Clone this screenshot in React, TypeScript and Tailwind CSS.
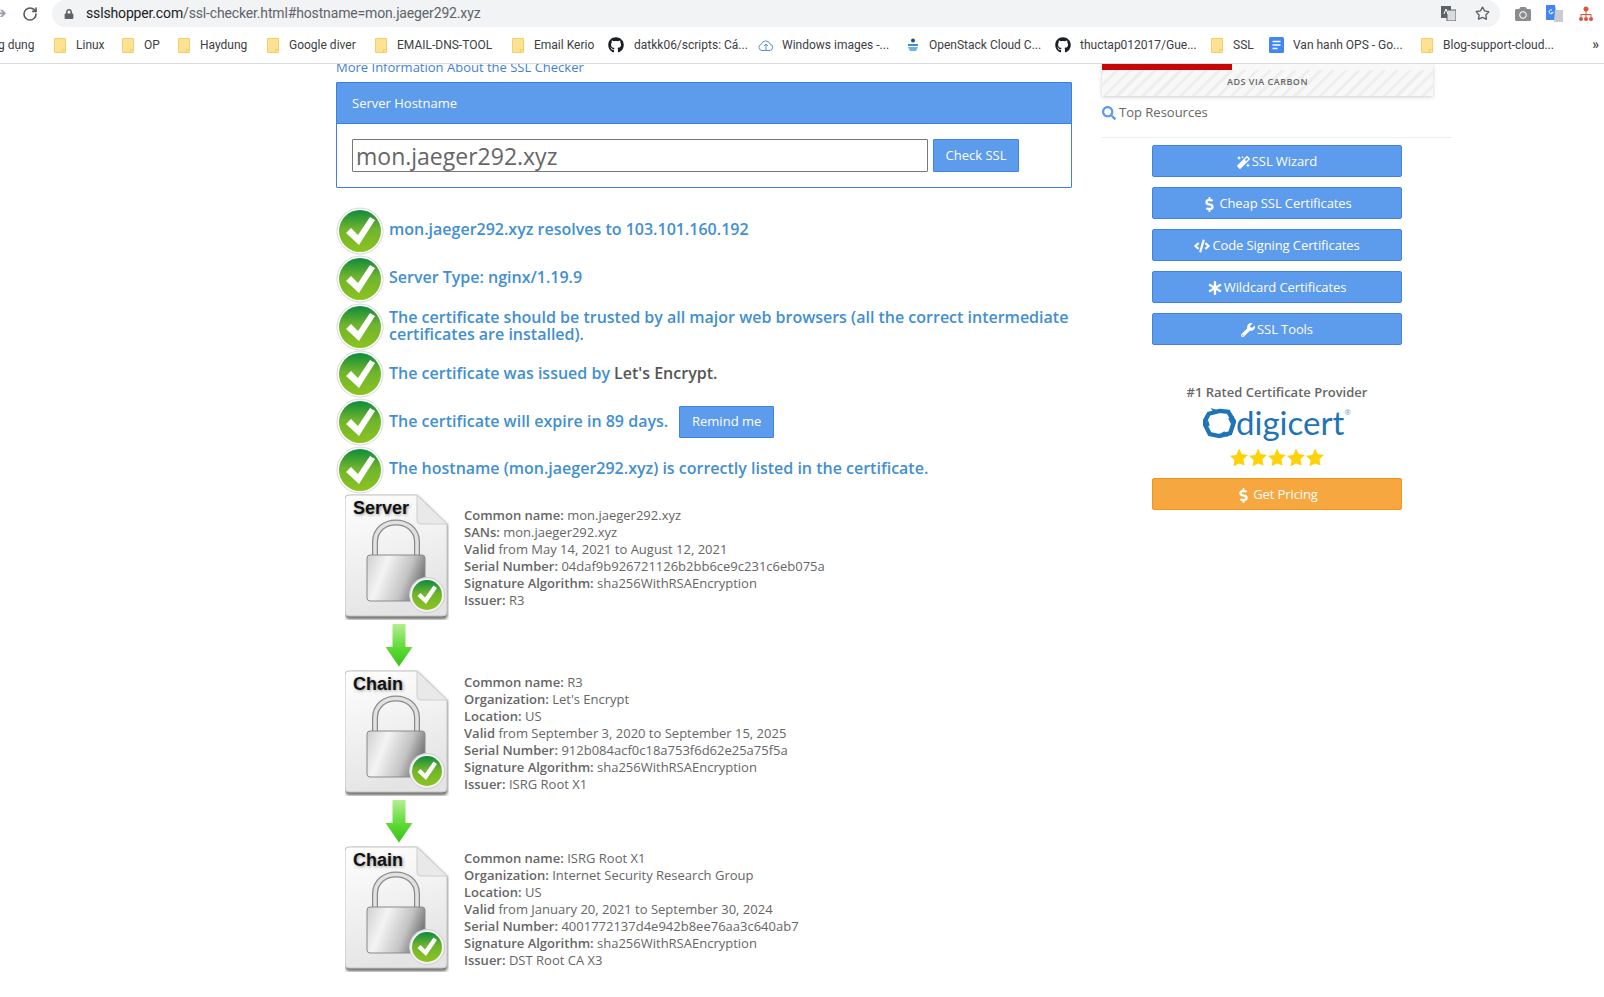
import { ReactNode } from "react";
import {
  FaAsterisk,
  FaCamera,
  FaCode,
  FaDollarSign,
  FaGithub,
  FaLock,
  FaMagic,
  FaSearch,
  FaWrench,
} from "react-icons/fa";
import { RotateCw, Star } from "lucide-react";

function Folder() {
  return (
    <svg width="12" height="15" viewBox="0 0 12 15" className="shrink-0">
      <path d="M.5.5h11v14H.5z" fill="#fde293" stroke="#f3cf6b" />
      <path d="M8.500 14.500v-3h3" fill="none" stroke="#f3cf6b" />
    </svg>
  );
}

function DocIcon() {
  return (
    <svg width="15" height="16" viewBox="0 0 15 16" className="shrink-0">
      <rect width="15" height="16" rx="1.500" fill="#4285f4" />
      <path d="M3.500 4.500h8M3.500 8h8M3.500 11.500h5" stroke="#fff" strokeWidth="1.600" />
    </svg>
  );
}

function CloudIcon() {
  return (
    <svg width="16" height="16" viewBox="0 0 16 16" className="shrink-0" fill="none" stroke="#5f8fc4">
      <path d="M4 13.500a3.200 3.200 0 0 1-.6-6.300A4.500 4.500 0 0 1 12 7a3.300 3.300 0 0 1 0 6.500z" />
      <path d="M6 9l2-2 2 2M8 7v6" />
    </svg>
  );
}

function StackIcon() {
  return (
    <svg width="12" height="14" viewBox="0 0 12 14" className="shrink-0">
      <circle cx="6" cy="2.500" r="2" fill="#2f4a6b" />
      <path d="M1 6h10v2H1z" fill="#3a8fd0" />
      <path d="M1 9h10l-2 4H3z" fill="#6db3e0" />
    </svg>
  );
}

const bookmarks: { icon: ReactNode; label: string; width: string; gap: string }[] = [
  { icon: <Folder />, label: "Linux", width: "w-[68px]", gap: "gap-[10px]" },
  { icon: <Folder />, label: "OP", width: "w-[56px]", gap: "gap-[10px]" },
  { icon: <Folder />, label: "Haydung", width: "w-[89px]", gap: "gap-[10px]" },
  { icon: <Folder />, label: "Google diver", width: "w-[108px]", gap: "gap-[10px]" },
  { icon: <Folder />, label: "EMAIL-DNS-TOOL", width: "w-[137px]", gap: "gap-[10px]" },
  { icon: <Folder />, label: "Email Kerio", width: "w-[96px]", gap: "gap-[10px]" },
  { icon: <FaGithub className="shrink-0 text-[16px] text-[#1b1f23]" />, label: "datkk06/scripts: Cá...", width: "w-[150px]", gap: "gap-[10px]" },
  { icon: <CloudIcon />, label: "Windows images -...", width: "w-[149px]", gap: "gap-[8px]" },
  { icon: <StackIcon />, label: "OpenStack Cloud C...", width: "w-[148px]", gap: "gap-[10px]" },
  { icon: <FaGithub className="shrink-0 text-[16px] text-[#1b1f23]" />, label: "thuctap012017/Gue...", width: "w-[156px]", gap: "gap-[9px]" },
  { icon: <Folder />, label: "SSL", width: "w-[58px]", gap: "gap-[10px]" },
  { icon: <DocIcon />, label: "Van hanh OPS - Go...", width: "w-[152px]", gap: "gap-[9px]" },
  { icon: <Folder />, label: "Blog-support-cloud...", width: "w-[160px]", gap: "gap-[10px]" },
];

function BrowserChrome() {
  return (
    <header className="h-[64px] shrink-0 border-b border-[#dadce0] bg-white font-['Roboto',sans-serif] text-[#3c4043]">
      <div className="flex h-[27px] items-center">
        <span className="w-[22px] -translate-x-[6px] text-[15px] text-[#9aa0a6]">➔</span>
        <RotateCw className="h-[16px] w-[16px] text-[#55585c]" strokeWidth={2.4} />
        <div className="ml-[14px] flex h-[27px] w-[1448px] items-center rounded-full bg-[#f1f3f4] pl-[12px] pr-[8px]">
          <FaLock className="text-[10px] text-[#5f6368]" />
          <span className="ml-[12px] text-[14px] tracking-[-0.15px] text-[#202124]">
            sslshopper.com<span className="text-[#5f6368]">/ssl-checker.html#hostname=mon.jaeger292.xyz</span>
          </span>
          <div className="ml-auto flex items-center gap-[19px] pr-[2px]">
            <svg width="15" height="15" viewBox="0 0 15 15">
              <rect width="10" height="12" fill="#5f6368" />
              <rect x="6" y="4" width="9" height="11" fill="#d9dbdd" stroke="#5f6368" />
              <path d="M3 8l2-5 2 5" stroke="#fff" fill="none" />
            </svg>
            <Star className="h-[15px] w-[15px] text-[#5f6368]" strokeWidth={2.2} />
          </div>
        </div>
        <div className="ml-[15px] flex items-center gap-[15px]">
          <FaCamera className="text-[16px] text-[#8a8d90]" />
          <svg width="17" height="17" viewBox="0 0 17 17">
            <path d="M0 0h9l2 15H0z" fill="#4285f4" />
            <path d="M9 5h8v12H8z" fill="#c9cdd2" />
            <path d="M6 5a2 2 0 1 0 1 2.500H5.400" stroke="#fff" fill="none" />
          </svg>
          <svg width="16" height="16" viewBox="0 0 16 16" fill="#e0523a">
            <circle cx="8" cy="3" r="2.500" />
            <path d="M7.500 5h1v3h5v3h-1V9h-4v2h-1V9h-4v2h-1V8h5z" />
            <circle cx="3" cy="13" r="2" />
            <circle cx="8" cy="13" r="2" />
            <circle cx="13" cy="13" r="2" />
          </svg>
        </div>
      </div>
      <div className="relative flex h-[36px] items-center text-[12px] text-[#3c4043]">
        <span className="w-[54px] shrink-0 whitespace-nowrap -indent-[2px]">g dụng</span>
        {bookmarks.map((b) => (
          <div key={b.label} className={`flex shrink-0 items-center ${b.gap} ${b.width}`}>
            {b.icon}
            <span className="whitespace-nowrap">{b.label}</span>
          </div>
        ))}
        <span className="absolute right-[5px] top-[10px] text-[14px] font-medium leading-none">»</span>
      </div>
    </header>
  );
}

function CheckBadge() {
  return (
    <svg width="48" height="48" viewBox="0 0 48 48" className="shrink-0">
      <defs>
        <linearGradient id="badgeGreen" x1="0" y1="0" x2="0" y2="1">
          <stop offset="0" stopColor="#0d8a3e" />
          <stop offset="0.45" stopColor="#6fb42c" />
          <stop offset="1" stopColor="#8cc320" />
        </linearGradient>
      </defs>
      <circle cx="24" cy="24" r="23" fill="#fff" stroke="#d9d9d9" />
      <circle cx="24" cy="24" r="21" fill="url(#badgeGreen)" />
      <path d="M10 26l5-5 7 7 12-18 5 3-16 25z" fill="#fff" />
    </svg>
  );
}

function ResultRow({ children, tight }: { children: ReactNode; tight?: boolean }) {
  return (
    <div className="flex h-[47.8px] items-center gap-[5px]">
      <CheckBadge />
      <div className={`text-[16px] font-semibold text-[#428fd0] ${tight ? "leading-[17px]" : "-mt-[3px]"}`}>
        {children}
      </div>
    </div>
  );
}

function CertFile({ label }: { label: string }) {
  return (
    <svg width="104" height="126" viewBox="0 0 104 126" className="shrink-0">
      <defs>
        <linearGradient id="pageFill" x1="0" y1="0" x2="0.3" y2="1">
          <stop offset="0" stopColor="#ffffff" />
          <stop offset="1" stopColor="#e4e4e4" />
        </linearGradient>
        <linearGradient id="lockBody" x1="0" y1="0" x2="1" y2="0.3">
          <stop offset="0" stopColor="#cfcfcf" />
          <stop offset="0.35" stopColor="#f4f4f4" />
          <stop offset="0.75" stopColor="#c4c4c4" />
          <stop offset="1" stopColor="#7d7d7d" />
        </linearGradient>
        <filter id="softBlur">
          <feGaussianBlur stdDeviation="1.400" />
        </filter>
      </defs>
      <path d="M4 1h68l30 29v90a4 4 0 0 1-4 4H4a4 4 0 0 1-4-4V5a4 4 0 0 1 4-4z" fill="#6d6d6d" transform="translate(0.5 1.2)" filter="url(#softBlur)" />
      <path d="M4 1h68l30 29v88a4 4 0 0 1-4 4H4a4 4 0 0 1-4-4V5a4 4 0 0 1 4-4z" fill="url(#pageFill)" stroke="#c4c4c4" />
      <path d="M72 1l30 29H76a4 4 0 0 1-4-4z" fill="#e9e9e9" stroke="#cfcfcf" />
      <text x="9" y="21" fontFamily="'Liberation Sans',sans-serif" fontWeight="700" fontSize="18" fill="#999" filter="url(#softBlur)">{label}</text>
      <text x="8" y="20" fontFamily="'Liberation Sans',sans-serif" fontWeight="700" fontSize="18" fill="#111">{label}</text>
      <path d="M30 64V48c0-26 42-26 42 0v16" fill="none" stroke="#8a8a8a" strokeWidth="6" />
      <path d="M30 64V48c0-26 42-26 42 0v16" fill="none" stroke="#e2e2e2" strokeWidth="3.500" />
      <rect x="22" y="61" width="58" height="46" rx="3" fill="url(#lockBody)" stroke="#8a8a8a" />
      <circle cx="82" cy="101" r="17.500" fill="#f2f2f2" stroke="#cfcfcf" />
      <circle cx="82" cy="101" r="15" fill="url(#badgeGreen)" />
      <path d="M72.500 102l3-3 4.500 4.500 8.500-12 3.500 2.500-11 16z" fill="#fff" />
    </svg>
  );
}

function ChainArrow() {
  return (
    <svg width="28" height="43" viewBox="0 0 28 43" className="mx-auto">
      <defs>
        <linearGradient id="arrowFill" x1="0" y1="0" x2="0" y2="1">
          <stop offset="0" stopColor="#b4ee90" />
          <stop offset="0.6" stopColor="#5ad832" />
          <stop offset="1" stopColor="#3cc01c" />
        </linearGradient>
      </defs>
      <path d="M7.500 0h13v23h7L14 42.500.5 23h7z" fill="url(#arrowFill)" />
    </svg>
  );
}

function CertRow({ label, lines, arrow }: { label: string; lines: [string, string][]; arrow?: boolean }) {
  return (
    <div className="flex">
      <div className="ml-[9px] w-[104px] shrink-0">
        <CertFile label={label} />
        {arrow && (
          <div className="flex h-[50px] items-start pl-[3px] pt-[4px]">
            <ChainArrow />
          </div>
        )}
      </div>
      <div className="ml-[15px] flex h-[126px] flex-col justify-center pt-[2px] text-[13px] leading-[17px] text-[#666]">
        {lines.map(([k, v]) => (
          <div key={k}>
            <span className="font-semibold">{k}</span> {v}
          </div>
        ))}
      </div>
    </div>
  );
}

function SideButton({ icon, label, orange }: { icon: ReactNode; label: string; orange?: boolean }) {
  return (
    <a
      className={`flex h-[32px] w-[250px] items-center justify-center gap-[2px] rounded-[2px] border pt-[2px] text-[13px] tracking-[-0.1px] text-white ${
        orange ? "border-[#f0941a] bg-[#f7a740]" : "border-[#3f84e5] bg-[#5d9bec]"
      }`}
    >
      {icon}
      {label}
    </a>
  );
}

function Stars() {
  return (
    <div className="flex justify-center gap-[1px]">
      {[0, 1, 2, 3, 4].map((i) => (
        <svg key={i} width="18" height="18" viewBox="0 0 20 20">
          <path d="M10 .5l3 6.300 6.900.9-5 4.800 1.300 6.900L10 17.100l-6.200 3.300 1.300-6.900-5-4.800 6.900-.9z" fill="#fdd20a" />
        </svg>
      ))}
    </div>
  );
}

function DigicertLogo() {
  return (
    <div className="flex h-[36px] items-center justify-center">
      <svg width="33" height="33" viewBox="0 0 34 34" className="shrink-0">
        <path d="M17 5l9 1 6 10-4 12-11 3-10-2-6-12 5-9z" fill="none" stroke="#1f73b7" strokeWidth="4.500" />
        <path d="M8 2l9 3-5 3zM32 10l-3 9-3-6zM26 32l-9-3 5-3zM1 22l4-8 2 6z" fill="#1f73b7" />
      </svg>
      <span className="font-['Lato',sans-serif] text-[33px] leading-none text-[#1f73b7]">digicert</span>
      <span className="-mt-[20px] text-[8px] leading-none text-[#6aa5d4]">®</span>
    </div>
  );
}

export default function App() {
  return (
    <div className="flex h-[997px] w-[1604px] flex-col overflow-hidden bg-white font-['Open_Sans',sans-serif] text-[#666]">
      <BrowserChrome />
      <main className="flex flex-1 overflow-hidden pl-[336px]">
        <div className="w-[736px] shrink-0">
          <a className="-mt-[5px] block text-[13px] leading-[17px] text-[#3f7fd9]">More Information About the SSL Checker</a>
          <section className="mt-[6px] h-[106px] rounded-[1px] border border-[#3f7fdc]">
            <div className="flex h-[41px] items-center border-b border-[#3f7fdc] bg-[#5d9bec] pl-[15px] pt-[2px] text-[13px] text-white">
              Server Hostname
            </div>
            <div className="flex gap-[5px] pl-[15px] pt-[15px]">
              <input
                readOnly
                value="mon.jaeger292.xyz"
                className="h-[33px] w-[576px] rounded-[1px] border border-[#777] pl-[3px] pt-[2px] text-[23px] text-[#666] outline-none"
              />
              <button className="h-[33px] w-[86px] rounded-[1px] border border-[#3f84e5] bg-[#5d9bec] text-[13px] text-white">
                Check SSL
              </button>
            </div>
          </section>
          <div className="mt-[19px]">
            <ResultRow>mon.jaeger292.xyz resolves to 103.101.160.192</ResultRow>
            <ResultRow>Server Type: nginx/1.19.9</ResultRow>
            <ResultRow tight>
              The certificate should be trusted by all major web browsers (all the correct intermediate certificates are installed).
            </ResultRow>
            <ResultRow>
              The certificate was issued by <span className="text-[#555]">Let's Encrypt.</span>
            </ResultRow>
            <ResultRow>
              <span className="flex items-center">
                The certificate will expire in 89 days.
                <button className="ml-[11px] mt-[3px] h-[32px] w-[95px] rounded-[1px] border border-[#3f84e5] bg-[#5d9bec] text-[13px] font-normal text-white">
                  Remind me
                </button>
              </span>
            </ResultRow>
            <ResultRow>The hostname (mon.jaeger292.xyz) is correctly listed in the certificate.</ResultRow>
          </div>
          <CertRow
            arrow
            label="Server"
            lines={[
              ["Common name:", "mon.jaeger292.xyz"],
              ["SANs:", "mon.jaeger292.xyz"],
              ["Valid", "from May 14, 2021 to August 12, 2021"],
              ["Serial Number:", "04daf9b926721126b2bb6ce9c231c6eb075a"],
              ["Signature Algorithm:", "sha256WithRSAEncryption"],
              ["Issuer:", "R3"],
            ]}
          />
          <CertRow
            arrow
            label="Chain"
            lines={[
              ["Common name:", "R3"],
              ["Organization:", "Let's Encrypt"],
              ["Location:", "US"],
              ["Valid", "from September 3, 2020 to September 15, 2025"],
              ["Serial Number:", "912b084acf0c18a753f6d62e25a75f5a"],
              ["Signature Algorithm:", "sha256WithRSAEncryption"],
              ["Issuer:", "ISRG Root X1"],
            ]}
          />
          <CertRow
            label="Chain"
            lines={[
              ["Common name:", "ISRG Root X1"],
              ["Organization:", "Internet Security Research Group"],
              ["Location:", "US"],
              ["Valid", "from January 20, 2021 to September 30, 2024"],
              ["Serial Number:", "4001772137d4e942b8ee76aa3c640ab7"],
              ["Signature Algorithm:", "sha256WithRSAEncryption"],
              ["Issuer:", "DST Root CA X3"],
            ]}
          />
        </div>
        <aside className="ml-[30px] w-[350px] shrink-0">
          <div className="h-[32px] w-[331px] bg-[repeating-linear-gradient(-45deg,#f8f8f9,#f8f8f9_6px,#eeeeef_6px,#eeeeef_9px)] shadow-[0_1px_4px_rgba(0,0,0,0.2)]">
            <div className="h-[6px] bg-[#f8f8f9]">
              <div className="h-[6px] w-[130px] bg-[#c60707]" />
            </div>
            <div className="pt-[5px] text-center text-[9px] font-semibold tracking-[0.5px] text-[#666]">ADS VIA CARBON</div>
          </div>
          <div className="mt-[2px] flex h-[30px] items-center gap-[3px] text-[13px] text-[#666]">
            <FaSearch className="text-[14px] text-[#5d9bec]" />
            Top Resources
          </div>
          <hr className="mt-[9px] border-[#eee]" />
          <div className="ml-[50px] mt-[7px] flex w-[250px] flex-col gap-[10px]">
            <SideButton icon={<FaMagic className="text-[13px]" />} label="SSL Wizard" />
            <SideButton icon={<FaDollarSign className="text-[15px]" />} label="Cheap SSL Certificates" />
            <SideButton icon={<FaCode className="text-[16px]" />} label="Code Signing Certificates" />
            <SideButton icon={<FaAsterisk className="text-[14px]" />} label="Wildcard Certificates" />
            <SideButton icon={<FaWrench className="text-[14px]" />} label="SSL Tools" />
          </div>
          <div className="ml-[50px] mt-[38px] w-[250px] text-center">
            <div className="text-[13px] font-semibold leading-[18px] text-[#666]">#1 Rated Certificate Provider</div>
            <div className="mt-[3px]">
              <DigicertLogo />
            </div>
            <div className="mt-[8px]">
              <Stars />
            </div>
            <div className="mt-[12px]">
              <SideButton orange icon={<FaDollarSign className="text-[15px]" />} label="Get Pricing" />
            </div>
          </div>
        </aside>
      </main>
    </div>
  );
}
